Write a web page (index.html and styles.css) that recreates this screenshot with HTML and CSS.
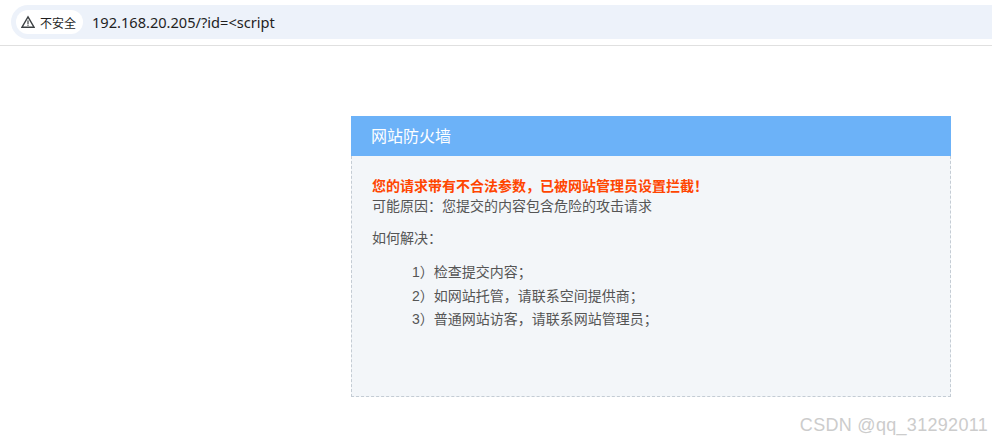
FILE: index.html
```html
<!DOCTYPE html>
<html lang="zh-CN">
<head>
    <meta charset="UTF-8">
    <title>网站防火墙</title>
    <link rel="stylesheet" href="styles.css">
</head>
<body>
    <div class="toolbar">
        <div class="address-bar">
            <span class="security-chip">
                <svg class="warn-icon" width="14" height="14" viewBox="0 0 14 14">
                    <path d="M7 1.8 L13 12.2 H1 Z" fill="none" stroke="#3c4043" stroke-width="1.4" stroke-linejoin="miter"/>
                    <rect x="6.4" y="5.4" width="1.2" height="3.6" fill="#3c4043"/>
                    <rect x="6.4" y="9.6" width="1.2" height="1.2" fill="#3c4043"/>
                </svg>
                不安全
            </span>
            <span class="url">192.168.20.205/?id=&lt;script</span>
        </div>
    </div>

    <div class="page">
        <div class="panel">
            <div class="panel-title">网站防火墙</div>
            <div class="panel-body">
                <div class="alert">您的请求带有不合法参数，已被网站管理员设置拦截！</div>
                <div>可能原因：您提交的内容包含危险的攻击请求</div>
                <p class="how">如何解决：</p>
                <ul class="steps">
                    <li>1）检查提交内容；</li>
                    <li>2）如网站托管，请联系空间提供商；</li>
                    <li>3）普通网站访客，请联系网站管理员；</li>
                </ul>
            </div>
        </div>
    </div>

    <div class="watermark">CSDN @qq_31292011</div>
</body>
</html>
```

FILE: styles.css
```css
html, body {
    margin: 0;
    height: 443px;
    overflow: hidden;
    background-color: #fff;
}
body {
    font-family: "Liberation Sans", "Noto Sans CJK SC", sans-serif;
    position: relative;
}
.toolbar {
    height: 46px;
    box-sizing: border-box;
    padding: 5px 0 0 11px;
    border-bottom: 1px solid #e0e0e0;
}
.address-bar {
    display: flex;
    align-items: center;
    height: 34px;
    padding-left: 5px;
    background-color: #edf2fa;
    border-radius: 17px 0 0 17px;
}
.security-chip {
    display: flex;
    align-items: center;
    gap: 5px;
    height: 24px;
    width: 67px;
    box-sizing: border-box;
    padding-left: 5px;
    background-color: #fff;
    border-radius: 12px;
    font-size: 12px;
    color: #1f1f1f;
}
.url {
    margin-left: 9px;
    font-family: "Noto Sans", "Noto Sans CJK SC", sans-serif;
    font-size: 14.6px;
    color: #1f1f1f;
}
.page {
    padding: 70px 41px 0 351px;
}
.panel-title {
    height: 40px;
    line-height: 41px;
    padding-left: 20px;
    background-color: #6cb2f8;
    color: #fff;
    font-size: 16px;
}
.panel-body {
    height: 241px;
    box-sizing: border-box;
    padding: 20px 20px 0 20px;
    background-color: #f3f6f9;
    border: 1px dashed #c4ccd4;
    border-top: none;
    font-size: 14px;
    line-height: 20px;
    color: #555;
}
.alert {
    color: #ff4500;
    font-weight: bold;
}
.how {
    margin: 12px 0 0 0;
}
.steps {
    list-style: none;
    margin: 13px 0 0 0;
    padding: 0 0 0 40px;
}
.steps li {
    height: 23.5px;
    line-height: 23.5px;
}
.watermark {
    position: absolute;
    right: 4px;
    top: 415px;
    font-size: 18px;
    letter-spacing: 0.3px;
    color: #ccc;
}
```
